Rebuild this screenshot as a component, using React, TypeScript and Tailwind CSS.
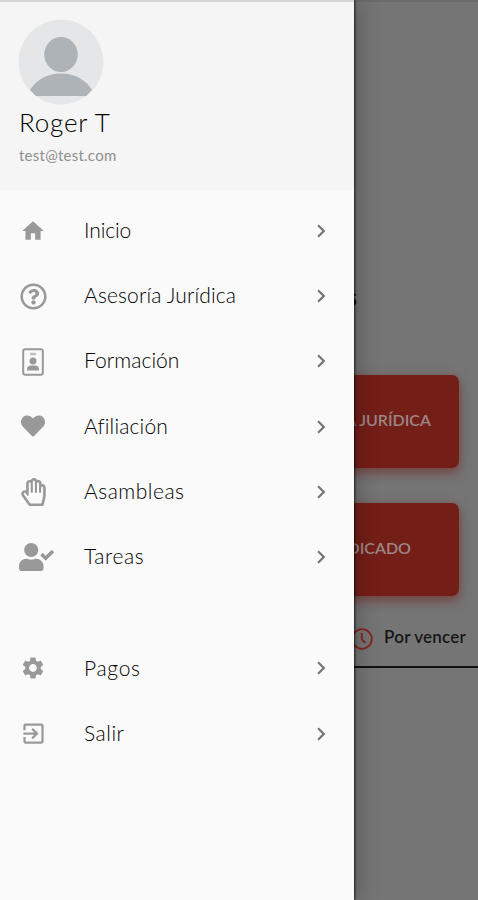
import type { IconType } from "react-icons"
import {
  FaHeart,
  FaRegHandPaper,
  FaRegQuestionCircle,
  FaUserCheck,
} from "react-icons/fa"
import { MdChevronRight, MdExitToApp, MdHome, MdSettings } from "react-icons/md"

type MenuItem = {
  label: string
  icon: IconType
  iconClass: string
  labelClass: string
}

const BadgeIcon: IconType = ({ className }) => (
  <svg viewBox="0 0 22 28" className={className} fill="currentColor">
    <rect
      x="1.2"
      y="1.2"
      width="19.6"
      height="25.6"
      rx="2"
      fill="none"
      stroke="currentColor"
      strokeWidth="2"
    />
    <rect x="7.8" y="4.8" width="6.4" height="2.4" rx="1" opacity="0.6" />
    <circle cx="11" cy="13" r="3.5" />
    <path d="M5 22.4v-1.5c0-2.2 1.6-3.5 3.8-3.5h4.4c2.2 0 3.8 1.3 3.8 3.5v1.5z" />
  </svg>
)

const ClockIcon: IconType = ({ className }) => (
  <svg
    viewBox="0 0 22 22"
    className={className}
    fill="none"
    stroke="currentColor"
    strokeWidth="1.8"
  >
    <circle cx="11" cy="11" r="9.8" />
    <path d="M10.8 5v6.4l3.6 3.6" />
  </svg>
)

const mainItems: MenuItem[] = [
  {
    label: "Inicio",
    icon: MdHome,
    iconClass: "size-[26px]",
    labelClass: "tracking-[-0.1px]",
  },
  {
    label: "Asesoría Jurídica",
    icon: FaRegQuestionCircle,
    iconClass: "size-[27px] translate-y-px",
    labelClass: "tracking-[0.12px]",
  },
  {
    label: "Formación",
    icon: BadgeIcon,
    iconClass: "h-[28px] w-[22px] translate-y-px",
    labelClass: "tracking-[0.05px]",
  },
  {
    label: "Afiliación",
    icon: FaHeart,
    iconClass: "size-[24px] -translate-y-px",
    labelClass: "tracking-[0.15px]",
  },
  {
    label: "Asambleas",
    icon: FaRegHandPaper,
    iconClass: "h-[28px] w-[25px]",
    labelClass: "tracking-[0.5px]",
  },
  {
    label: "Tareas",
    icon: FaUserCheck,
    iconClass: "h-[28px] w-[35px] translate-x-[3px]",
    labelClass: "tracking-[0.6px]",
  },
]

const accountItems: MenuItem[] = [
  {
    label: "Pagos",
    icon: MdSettings,
    iconClass: "size-[26px]",
    labelClass: "tracking-[0.7px]",
  },
  {
    label: "Salir",
    icon: MdExitToApp,
    iconClass: "size-[27px]",
    labelClass: "tracking-[0.5px]",
  },
]

const MenuRow = ({ label, icon: Icon, iconClass, labelClass }: MenuItem) => (
  <li className="flex h-[65.3px] items-center pl-[19px] pr-[20px]">
    <span className="flex w-7 shrink-0 justify-center text-[#999999]">
      <Icon className={`shrink-0 ${iconClass}`} />
    </span>
    <span
      className={`ml-[37px] flex-1 pb-[2px] text-[21px] font-light text-black ${labelClass}`}
    >
      {label}
    </span>
    <MdChevronRight className="size-[26px] text-[#757575]" />
  </li>
)

const Avatar = () => (
  <svg viewBox="0 0 86 86" className="size-[86px]">
    <circle cx="43" cy="43" r="42.5" fill="#e4e6e8" />
    <ellipse cx="43" cy="35.5" rx="16.7" ry="17.5" fill="#adb3b6" />
    <path d="M12 71C18 61 29 54.5 43 54.5S68 61 74 71L68 77H18Z" fill="#adb3b6" />
  </svg>
)

const Drawer = () => (
  <aside className="absolute inset-y-0 left-0 w-[354px] bg-[#fafafa] shadow-[1px_0_2px_rgba(0,0,0,0.7),4px_0_20px_rgba(0,0,0,0.25)]">
    <header className="h-[190px] border-t-2 border-[#d6d6d6] bg-[#f5f5f5] pl-[18px] pt-[17px]">
      <Avatar />
      <div className="mt-[2px] pl-px text-[26px] font-light leading-[30px] tracking-[0.8px] text-black">
        Roger T
      </div>
      <div className="mt-[8px] pl-px text-[15px] leading-5 tracking-[0.25px] text-[#8f8f8f]">
        test@test.com
      </div>
    </header>
    <ul className="mt-[8px]">
      {mainItems.map((item) => (
        <MenuRow key={item.label} {...item} />
      ))}
    </ul>
    <ul className="mt-[46px]">
      {accountItems.map((item) => (
        <MenuRow key={item.label} {...item} />
      ))}
    </ul>
  </aside>
)

const HomeScreen = () => (
  <main className="h-full border-t-2 border-[#6b6b6b] bg-[#757575]">
    <h1 className="mr-[121px] mt-[281px] text-right text-[24px] font-bold leading-7 text-[#151515]">
      Servicios
    </h1>
    <div className="ml-[19px] mr-[19px] mt-[64px] flex flex-col gap-[35px]">
      <div className="flex h-[93px] items-center justify-end rounded-[7px] bg-[#741e18] pb-[3px] pr-[28px] text-[16px] font-semibold text-[#9b8785] shadow-[0_4px_12px_rgba(113,30,24,0.65)]">
        ASESORÍA JURÍDICA
      </div>
      <div className="flex h-[93px] items-center justify-end rounded-[7px] bg-[#741e18] pb-[3px] pr-[48px] text-[16px] font-semibold text-[#9b8785] shadow-[0_4px_12px_rgba(113,30,24,0.65)]">
        CARNET SINDICADO
      </div>
    </div>
    <div className="mt-[30px] flex h-[42px] items-center justify-end border-b-2 border-[#111111] pb-[16px] pr-[12px]">
      <ClockIcon className="mr-[11px] size-[22px] translate-y-px text-[#8a221f]" />
      <span className="pb-[2px] text-[17px] font-semibold tracking-[0.2px] text-[#151515]">
        Por vencer
      </span>
    </div>
  </main>
)

export default function App() {
  return (
    <div className="relative h-[900px] w-[478px] overflow-hidden font-['Lato','Open_Sans',sans-serif]">
      <HomeScreen />
      <Drawer />
    </div>
  )
}
